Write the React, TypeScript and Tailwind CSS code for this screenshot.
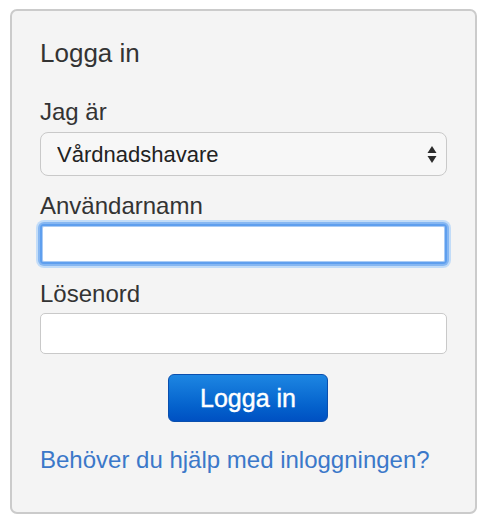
import React from "react";

export default function App() {
  return (
    <div className="min-h-[522px] w-[486px] bg-white pt-[9px] pl-[10px]" style={{ fontFamily: '"Liberation Sans", Arial, Helvetica, sans-serif' }}>
      <div className="box-border flex h-[505px] w-[467px] flex-col rounded-[7px] border-2 border-[#cbcbcb] bg-[#f4f4f4] px-[28px] pt-[27px]">
        <h1 className="h-[30px] text-[26px] leading-[30px] font-normal text-[#333333]">Logga in</h1>

        <label className="mt-[30px] block h-[28px] text-[24px] leading-[28px] text-[#333333]">Jag är</label>
        <div className="relative mt-[6px] h-[44px]">
          <select
            defaultValue="v"
            className="box-border h-[44px] w-full appearance-none rounded-[8px] border-[1.5px] border-[#c9c9c9] bg-[#f7f7f7] pl-[16px] text-[22px] text-[#222222] outline-none"
            style={{ fontFamily: '"Liberation Sans", Arial, Helvetica, sans-serif' }}
          >
            <option value="v">Vårdnadshavare</option>
          </select>
          <svg className="pointer-events-none absolute right-[10px] top-[13px]" width="10" height="19" viewBox="0 0 10 19">
            <polygon points="5,1 9.5,8 0.5,8" fill="#2b2b2b" />
            <polygon points="0.5,11 9.5,11 5,18" fill="#2b2b2b" />
          </svg>
        </div>

        <label className="mt-[16px] block h-[28px] text-[24px] leading-[28px] text-[#333333]">Användarnamn</label>
        <input
          type="text"
          className="mt-[4px] box-border h-[40px] w-full rounded-[4px] border-2 border-[#5f9fee] bg-white outline-none shadow-[0_0_0_2px_#86b7f2,0_0_0_4px_#c2dcf8,inset_0_0_0_1px_#a9cbf5]"
        />

        <label className="mt-[16px] block h-[28px] text-[24px] leading-[28px] text-[#333333]">Lösenord</label>
        <input
          type="password"
          className="mt-[5px] box-border h-[41px] w-full rounded-[5px] border-[1.5px] border-[#c9c9c9] bg-white outline-none"
        />

        <div className="mt-[20px] flex justify-center pl-[9px]">
          <button
            type="button"
            className="box-border h-[48px] w-[160px] rounded-[6px] border border-[#0a4fae] bg-gradient-to-b from-[#1d86e2] to-[#0050c2] text-[25px] leading-[46px] text-white"
            style={{ fontFamily: '"Liberation Sans", Arial, Helvetica, sans-serif', WebkitTextStroke: "0.4px white" }}
          >
            Logga in
          </button>
        </div>

        <a href="#" className="mt-[24px] block h-[28px] text-[24px] leading-[28px] text-[#3b78c9]">
          Behöver du hjälp med inloggningen?
        </a>
      </div>
    </div>
  );
}
